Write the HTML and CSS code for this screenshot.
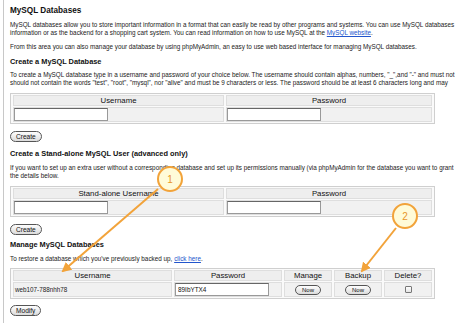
FILE: index.html
```html
<!DOCTYPE html>
<html lang="en">
<head>
  <meta charset="UTF-8" />
  <title>MySQL Databases</title>
  <link rel="stylesheet" href="styles.css">
</head>
<body>
  <div class="page">
    <h1>MySQL Databases</h1>
    <p class="intro">MySQL databases allow you to store important information in a format that can easily be read by other programs and systems. You can use MySQL databases<br>information or as the backend for a shopping cart system. You can read information on how to use MySQL at the <a href="#">MySQL website</a>.</p>
    <p class="intro-2">From this area you can also manage your database by using phpMyAdmin, an easy to use web based interface for managing MySQL databases.</p>

    <h2>Create a MySQL Database</h2>
    <p>To create a MySQL database type in a username and password of your choice below. The username should contain alphas, numbers, "_",and "-" and must not<br>should not contain the words "test", "root", "mysql", nor "alive" and must be 9 characters or less. The password should be at least 6 characters long and may</p>
    <table class="form-table">
      <tr>
        <th class="col-wide">Username</th>
        <th>Password</th>
      </tr>
      <tr>
        <td><input type="text" class="field"></td>
        <td><input type="text" class="field"></td>
      </tr>
    </table>
    <button class="pill">Create</button>

    <h2 class="after-btn">Create a Stand-alone MySQL User (advanced only)</h2>
    <p class="after-head">If you want to set up an extra user without a corresponding database and set up its permissions manually (via phpMyAdmin for the database you want to grant<br>the details below.</p>
    <table class="form-table">
      <tr>
        <th class="col-wide">Stand-alone Username</th>
        <th>Password</th>
      </tr>
      <tr>
        <td><input type="text" class="field"></td>
        <td><input type="text" class="field"></td>
      </tr>
    </table>
    <button class="pill">Create</button>

    <h2 class="after-btn last">Manage MySQL Databases</h2>
    <p class="after-head">To restore a database which you've previously backed up, <a href="#">click here</a>.</p>
    <table class="form-table manage">
      <tr>
        <th class="col-user">Username</th>
        <th class="col-pass">Password</th>
        <th class="col-small">Manage</th>
        <th class="col-small">Backup</th>
        <th>Delete?</th>
      </tr>
      <tr>
        <td class="db-name">web107-788nhh78</td>
        <td class="cell-left"><input type="text" class="field" value="89IbYTX4"></td>
        <td><button class="pill small">Now</button></td>
        <td><button class="pill small">Now</button></td>
        <td><input type="checkbox" class="check"></td>
      </tr>
    </table>
    <button class="pill modify">Modify</button>
  </div>

  <svg class="callouts" width="456" height="323" viewBox="0 0 456 323">
    <defs>
      <marker id="head" viewBox="0 0 10 10" refX="8" refY="5" markerWidth="5" markerHeight="5" orient="auto">
        <path d="M0 0 L10 5 L0 10 Z" fill="#f2a33a"/>
      </marker>
    </defs>
    <line x1="158" y1="189" x2="63" y2="271" stroke="#f2a33a" stroke-width="2" marker-end="url(#head)"/>
    <circle cx="170" cy="179" r="12" fill="#fffbd8" stroke="#f2a33a" stroke-width="2"/>
    <text x="170" y="183" text-anchor="middle" class="num">1</text>
    <line x1="396" y1="228" x2="362" y2="271" stroke="#f2a33a" stroke-width="2" marker-end="url(#head)"/>
    <circle cx="405" cy="216" r="12" fill="#fffbd8" stroke="#f2a33a" stroke-width="2"/>
    <text x="405" y="220" text-anchor="middle" class="num">2</text>
  </svg>
</body>
</html>
```

FILE: styles.css
```css
* {
  box-sizing: border-box;
}

body {
  margin: 0;
  width: 456px;
  height: 323px;
  overflow: hidden;
  position: relative;
  background: #fff;
  color: #111;
  font-family: "Liberation Sans", Arial, sans-serif;
}

.page {
  margin-left: 3px;
  padding-left: 6px;
  border-left: 1px solid #c8c8c8;
  height: 323px;
}

h1 {
  margin: 0;
  padding-top: 6px;
  font-size: 8.2px;
  line-height: 10px;
}

h2 {
  margin: 6px 0 0;
  font-size: 7.4px;
  line-height: 10px;
}

h2.after-btn {
  margin-top: 7px;
}

h2.last {
  margin-top: 5px;
}

p {
  margin: 4px 0 0;
  font-size: 6.35px;
  line-height: 8px;
  white-space: nowrap;
  color: #222;
}

p.after-head {
  margin-top: 5px;
}

.intro {
  margin-top: 5px;
}

.intro-2 {
  margin-top: 6px;
}

a {
  color: #2255cc;
}

.form-table {
  margin-top: 6px;
  width: 425px;
  border: 1px solid #cfcfcf;
  border-spacing: 2px 1px;
  background: #fafafa;
  font-size: 7px;
  line-height: 8px;
}

.form-table th,
.form-table td {
  padding: 0;
  border: 1px solid #dedede;
  background: #f1f1f1;
}

.form-table th {
  height: 11px;
  font-size: 7.8px;
  line-height: 9px;
  font-weight: normal;
  color: #111;
  text-align: center;
  background: #eeeeee;
}

.form-table td {
  height: 15px;
  text-align: left;
}

.col-wide {
  width: 211px;
}

.field {
  display: block;
  width: 94px;
  height: 13px;
  margin: 0;
  padding: 0 2px;
  border: 1px solid #999;
  border-top-color: #666;
  background: #fff;
  font-family: "Liberation Sans", Arial, sans-serif;
  font-size: 6.4px;
  color: #111;
}

.pill {
  display: block;
  margin-top: 7px;
  height: 11px;
  padding: 0 5px;
  border: 1px solid #555;
  border-radius: 6px;
  background: linear-gradient(#fdfdfd, #dcdcdc);
  font-family: "Liberation Sans", Arial, sans-serif;
  font-size: 6.6px;
  line-height: 9px;
  color: #111;
}

.pill.modify {
  margin-top: 6px;
}

.pill.small {
  display: inline-block;
  margin: 0;
  height: 10px;
  width: 26px;
  padding: 0;
  font-size: 6px;
  line-height: 8px;
  vertical-align: middle;
}

.manage {
  margin-top: 5px;
}

.manage td {
  text-align: center;
  height: 15px;
}

.manage .db-name {
  text-align: left;
  padding-left: 1px;
  font-size: 6.3px;
  color: #222;
}

.manage .cell-left {
  text-align: left;
}

.col-user {
  width: 159px;
}

.col-pass {
  width: 108px;
}

.col-small {
  width: 48px;
}

.check {
  appearance: none;
  display: inline-block;
  margin: 0;
  width: 7px;
  height: 7px;
  border: 1px solid #777;
  border-radius: 1px;
  background: linear-gradient(#fff, #e4e4e4);
  vertical-align: middle;
}

.callouts {
  position: absolute;
  left: 0;
  top: 0;
  pointer-events: none;
}

.num {
  font-family: "Liberation Sans", Arial, sans-serif;
  font-size: 10px;
  fill: #e8962a;
}
```
